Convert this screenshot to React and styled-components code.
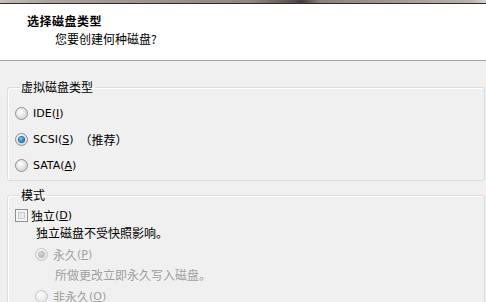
import styled, { createGlobalStyle } from "styled-components";

const GlobalStyle = createGlobalStyle`
  html, body {
    margin: 0;
    padding: 0;
    background: #f0f0f0;
  }
  body {
    font-family: "Noto Sans CJK SC", "DejaVu Sans", sans-serif;
    font-size: 12px;
    color: #000;
  }
`;

const Page = styled.div`
  width: 486px;
  height: 302px;
  overflow: hidden;
  background: #f0f0f0;
`;

const TitleStrip = styled.div`
  height: 3px;
  border-bottom: 1px solid #2f2b2a;
  background: linear-gradient(
    90deg,
    #c3bfbb 0%,
    #aaa39d 10%,
    #9c948e 30%,
    #8f8680 52%,
    #5a5150 60%,
    #453d3c 62%,
    #8b827c 66%,
    #a19993 82%,
    #b9b3af 97%,
    #d8d4d1 100%
  );
`;

const Header = styled.div`
  height: 57px;
  background: #fff;
  border-bottom: 1px solid #a0a0a0;
  box-sizing: border-box;
  padding: 8px 0 0 27px;
  display: flex;
  flex-direction: column;
`;

const HeaderTitle = styled.div`
  font-weight: bold;
  line-height: 18px;
  letter-spacing: 0.5px;
`;

const HeaderSub = styled.div`
  line-height: 18px;
  padding-left: 28px;
`;

const Body = styled.div`
  padding: 0 1px 0 7px;
  display: flex;
  flex-direction: column;
`;

const Group = styled.fieldset`
  margin: ${(p) => p.$top}px 0 0 0;
  padding: ${(p) => p.$pad};
  border: 1px solid #d5dfe5;
  border-radius: 3px;
  box-shadow: inset 1px 1px 0 #fff;
  min-width: 0;
  display: flex;
  flex-direction: column;
`;

const Legend = styled.legend`
  padding: 0 2px 0 1px;
  margin-left: 5px;
  line-height: 16px;
`;

const Row = styled.div`
  display: flex;
  align-items: center;
  height: ${(p) => p.$h}px;
  padding-left: ${(p) => p.$indent || 0}px;
  color: ${(p) => (p.$disabled ? "#a0a0a0" : "#000")};
`;

const Lat = styled.span`
  font-family: "DejaVu Sans", sans-serif;
  font-size: 11px;
`;

const Key = styled.u`
  text-underline-offset: 1px;
`;

const Radio = styled.span`
  width: 13px;
  height: 13px;
  box-sizing: border-box;
  border-radius: 50%;
  border: 1px solid ${(p) => (p.$disabled ? "#c5c5c5" : "#8e8f8f")};
  background: ${(p) =>
    p.$disabled
      ? "radial-gradient(circle at 40% 35%, #fdfdfd, #e6e6e6 70%)"
      : "radial-gradient(circle at 40% 35%, #ffffff, #e0e0e0 55%, #cfd0d0 100%)"};
  margin-right: 5px;
  display: flex;
  align-items: center;
  justify-content: center;
  flex-shrink: 0;

  &::after {
    content: "";
    display: ${(p) => (p.$checked ? "block" : "none")};
    width: 5px;
    height: 5px;
    border-radius: 50%;
    background: ${(p) =>
      p.$disabled
        ? "radial-gradient(circle at 40% 35%, #d8d8d8, #a8a8a8)"
        : "radial-gradient(circle at 40% 35%, #7fd2ff, #1a7fc7 60%, #0c4f8a)"};
    box-shadow: ${(p) =>
      p.$disabled ? "0 0 0 1px #bdbdbd" : "0 0 0 1px #2a6aa0"};
  }
`;

const Check = styled.span`
  width: 13px;
  height: 13px;
  box-sizing: border-box;
  border: 1px solid #8e8f8f;
  background: linear-gradient(135deg, #dcdcdc, #f6f6f6);
  box-shadow: inset 0 0 0 2px #f4f4f4, inset 0 0 0 3px #c9c9c9;
  margin-right: 3px;
  flex-shrink: 0;
`;

const Note = styled.span`
  margin-left: 6px;
`;

const Hint = styled.div`
  height: ${(p) => p.$h}px;
  line-height: ${(p) => p.$h}px;
  padding-left: ${(p) => p.$indent}px;
  color: ${(p) => (p.$disabled ? "#a0a0a0" : "#000")};
`;

const Choice = ({ label, hot, rest = ")", checked, disabled, note }) => (
  <>
    <Radio $checked={checked} $disabled={disabled} />
    <Lat>
      {label}(<Key>{hot}</Key>
      {rest}
    </Lat>
    {note && <Note>{note}</Note>}
  </>
);

export default function App() {
  return (
    <Page>
      <GlobalStyle />
      <TitleStrip />
      <Header>
        <HeaderTitle>选择磁盘类型</HeaderTitle>
        <HeaderSub>您要创建何种磁盘?</HeaderSub>
      </Header>
      <Body>
        <Group $top={18} $pad="5px 0 1px 7px">
          <Legend>虚拟磁盘类型</Legend>
          <Row $h={26}>
            <Choice label="IDE" hot="I" />
          </Row>
          <Row $h={26}>
            <Choice label="SCSI" hot="S" checked note="（推荐）" />
          </Row>
          <Row $h={27}>
            <Choice label="SATA" hot="A" />
          </Row>
        </Group>
        <Group $top={6} $pad="3px 0 0 7px">
          <Legend>模式</Legend>
          <Row $h={18}>
            <Check />
            独立<Lat>(<Key>D</Key>)</Lat>
          </Row>
          <Hint $h={18} $indent={21}>
            独立磁盘不受快照影响。
          </Hint>
          <Row $h={24} $indent={20} $disabled>
            <Radio $checked $disabled />
            永久<Lat>(<Key>P</Key>)</Lat>
          </Row>
          <Hint $h={18} $indent={40} $disabled>
            所做更改立即永久写入磁盘。
          </Hint>
          <Row $h={24} $indent={20} $disabled>
            <Radio $disabled />
            非永久<Lat>(<Key>O</Key>)</Lat>
          </Row>
        </Group>
      </Body>
    </Page>
  );
}
